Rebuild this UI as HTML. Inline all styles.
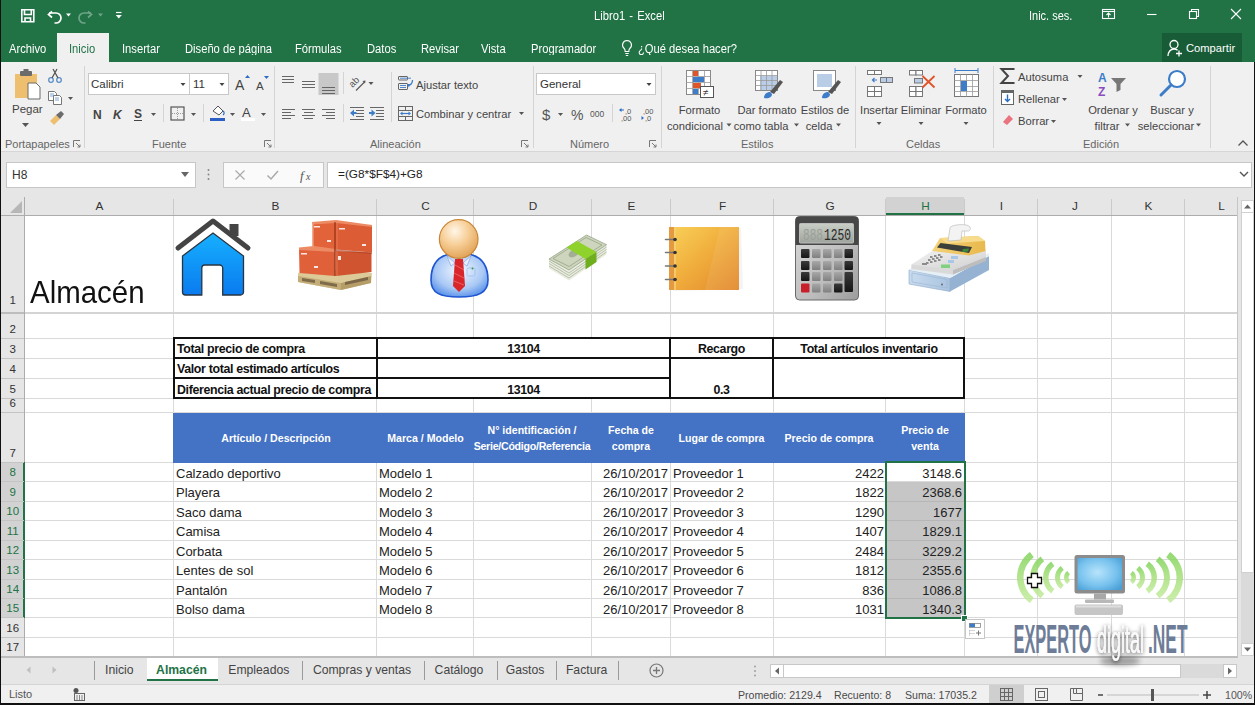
<!DOCTYPE html><html><head><meta charset="utf-8"><style>
*{margin:0;padding:0;box-sizing:border-box}
html,body{width:1255px;height:705px;overflow:hidden;background:#e6e6e6;font-family:"Liberation Sans", sans-serif;}
.a{position:absolute}
.t{position:absolute;white-space:nowrap;line-height:1}
.w{color:#fff}
.rt{color:#444;font-size:11px}
.gl{color:#666;font-size:11px}
.sep{position:absolute;width:1px;background:#d4d4d4}
.vl{position:absolute;width:1px;background:#dadada}
.hl{position:absolute;height:1px;background:#dadada}
.cell{position:absolute;white-space:nowrap;line-height:1;font-size:12.6px;color:#222}
.b{font-weight:bold}
.blk{position:absolute;background:#111}
</style></head><body>
<div class="a" style="left:0;top:0;width:1255px;height:62px;background:#217346"></div>
<svg class="a" style="left:0;top:0" width="140" height="32" viewBox="0 0 140 32">
<g fill="none" stroke="#fff" stroke-width="1.6">
<path d="M21.8 9.8h12v12h-12z"/><path d="M24.5 10v4.5h6.8V10"/><path d="M25 21.5v-3.5h5.5v3.5"/>
</g>
<path d="M52 11.5 L48.5 14.5 L52 17.5" fill="none" stroke="#fff" stroke-width="1.7"/>
<path d="M49 14.5 H56 a5 5 0 0 1 0 10 h-1.5" fill="none" stroke="#fff" stroke-width="1.7" transform="translate(0,-1.5)"/>
<path d="M66 13.5h5l-2.5 3z" fill="#fff"/>
<g opacity="0.35"><path d="M88 11.5 L91.5 14.5 L88 17.5" fill="none" stroke="#fff" stroke-width="1.7"/>
<path d="M91 13 H84 a5 5 0 0 0 0 10 h1.5" fill="none" stroke="#fff" stroke-width="1.7"/>
<path d="M98 13.5h5l-2.5 3z" fill="#fff"/></g>
<path d="M116 12.5h5.5" stroke="#fff" stroke-width="1.2"/><path d="M115.8 15h6l-3 3.5z" fill="#fff"/>
</svg>
<div class="t w" style="left:594px;top:10.5px;font-size:11.2px;transform:scaleY(1.15);transform-origin:0 100%;word-spacing:-1px">Libro1&nbsp; -&nbsp; Excel</div>
<div class="t w" style="left:1029px;top:10.5px;font-size:11px;transform:scaleY(1.15);transform-origin:0 100%">Inic. ses.</div>
<svg class="a" style="left:1095px;top:0" width="160" height="32" viewBox="1095 0 160 32">
<g fill="none" stroke="#fff" stroke-width="1.1">
<rect x="1102.5" y="9.5" width="12" height="9"/><path d="M1102.5 11.5h12"/><path d="M1108.5 17.5v-4.5M1106.5 15l2-2 2 2"/>
<path d="M1147 14.5h9.5"/>
<rect x="1189.5" y="11.5" width="7" height="7"/><path d="M1191.5 11.5v-2h7v7h-2"/>
<path d="M1231 9l10 10M1241 9l-10 10"/>
</g></svg>
<div class="a" style="left:57px;top:33px;width:52px;height:30px;background:#f0f0f0"></div>
<div class="t" style="left:9px;top:43.5px;font-size:11.2px;color:#fff;transform:scaleY(1.13);transform-origin:0 100%">Archivo</div>
<div class="t" style="left:69px;top:43.5px;font-size:11.2px;color:#217346;transform:scaleY(1.13);transform-origin:0 100%">Inicio</div>
<div class="t" style="left:122px;top:43.5px;font-size:11.2px;color:#fff;transform:scaleY(1.13);transform-origin:0 100%">Insertar</div>
<div class="t" style="left:185px;top:43.5px;font-size:11.2px;color:#fff;transform:scaleY(1.13);transform-origin:0 100%">Diseño de página</div>
<div class="t" style="left:295px;top:43.5px;font-size:11.2px;color:#fff;transform:scaleY(1.13);transform-origin:0 100%">Fórmulas</div>
<div class="t" style="left:367px;top:43.5px;font-size:11.2px;color:#fff;transform:scaleY(1.13);transform-origin:0 100%">Datos</div>
<div class="t" style="left:421px;top:43.5px;font-size:11.2px;color:#fff;transform:scaleY(1.13);transform-origin:0 100%">Revisar</div>
<div class="t" style="left:481px;top:43.5px;font-size:11.2px;color:#fff;transform:scaleY(1.13);transform-origin:0 100%">Vista</div>
<div class="t" style="left:531px;top:43.5px;font-size:11.2px;color:#fff;transform:scaleY(1.13);transform-origin:0 100%">Programador</div>
<div class="t" style="left:638px;top:43.5px;font-size:11.2px;color:#fff;transform:scaleY(1.13);transform-origin:0 100%">¿Qué desea hacer?</div>
<svg class="a" style="left:618px;top:38px" width="18" height="20" viewBox="0 0 18 20"><g fill="none" stroke="#fff" stroke-width="1.1"><path d="M9 2.5a4.5 4.5 0 0 0-2.8 8c.6.6.9 1.4.9 2.2v.8h3.8v-.8c0-.8.3-1.6.9-2.2A4.5 4.5 0 0 0 9 2.5z"/><path d="M7.3 15.5h3.4M7.8 17.5h2.4"/></g></svg>
<div class="a" style="left:1162px;top:33px;width:80px;height:29px;background:#185c37"></div>
<svg class="a" style="left:1166px;top:38px" width="18" height="20" viewBox="0 0 18 20"><g fill="none" stroke="#fff" stroke-width="1.3"><circle cx="8" cy="6.5" r="4"/><path d="M2 18c0-4 2.5-7 6-7 1.5 0 2.7.5 3.6 1.2"/><path d="M13 12.5v6M10 15.5h6"/></g></svg>
<div class="t w" style="left:1186px;top:43px;font-size:11.2px">Compartir</div>
<div class="a" style="left:0;top:62px;width:1255px;height:90px;background:#f0f0f0;border-bottom:1px solid #d6d6d6"></div>
<div class="sep" style="left:84px;top:66px;height:82px"></div>
<div class="sep" style="left:274px;top:66px;height:82px"></div>
<div class="sep" style="left:533px;top:66px;height:82px"></div>
<div class="sep" style="left:661px;top:66px;height:82px"></div>
<div class="sep" style="left:855px;top:66px;height:82px"></div>
<div class="sep" style="left:993px;top:66px;height:82px"></div>
<div class="sep" style="left:1210px;top:66px;height:82px"></div>
<div class="t gl" style="left:5px;top:139px">Portapapeles</div>
<div class="t gl" style="left:152px;top:139px">Fuente</div>
<div class="t gl" style="left:370px;top:139px">Alineación</div>
<div class="t gl" style="left:570px;top:139px">Número</div>
<div class="t gl" style="left:741px;top:139px">Estilos</div>
<div class="t gl" style="left:906px;top:139px">Celdas</div>
<div class="t gl" style="left:1083px;top:139px">Edición</div>
<svg class="a" style="left:73px;top:140px" width="8" height="8" viewBox="0 0 8 8"><path d="M.5 7V.5H7" fill="none" stroke="#777" stroke-width="1"/><path d="M3 3l4 4M7 4.5V7H4.5" fill="none" stroke="#777" stroke-width="1"/></svg>
<svg class="a" style="left:264px;top:140px" width="8" height="8" viewBox="0 0 8 8"><path d="M.5 7V.5H7" fill="none" stroke="#777" stroke-width="1"/><path d="M3 3l4 4M7 4.5V7H4.5" fill="none" stroke="#777" stroke-width="1"/></svg>
<svg class="a" style="left:521px;top:140px" width="8" height="8" viewBox="0 0 8 8"><path d="M.5 7V.5H7" fill="none" stroke="#777" stroke-width="1"/><path d="M3 3l4 4M7 4.5V7H4.5" fill="none" stroke="#777" stroke-width="1"/></svg>
<svg class="a" style="left:649px;top:140px" width="8" height="8" viewBox="0 0 8 8"><path d="M.5 7V.5H7" fill="none" stroke="#777" stroke-width="1"/><path d="M3 3l4 4M7 4.5V7H4.5" fill="none" stroke="#777" stroke-width="1"/></svg>
<svg class="a" style="left:1237px;top:139px" width="12" height="8" viewBox="0 0 12 8"><path d="M1.5 6.5l4.5-4.5 4.5 4.5" fill="none" stroke="#555" stroke-width="1.3"/></svg>
<svg class="a" style="left:0;top:62px" width="84" height="80" viewBox="0 62 84 80">
<rect x="15" y="74" width="22" height="24" fill="#eebf6e"/>
<rect x="20" y="71" width="12" height="5" rx="1" fill="#6b6b6b"/><rect x="23.5" y="69" width="5" height="3" fill="#6b6b6b"/>
<path d="M28 83h8l4 4v12H28z" fill="#fff" stroke="#6b6b6b" stroke-width="1"/>
<g fill="none" stroke="#5b8fc7" stroke-width="1.3"><circle cx="51" cy="80" r="2.3"/><circle cx="59" cy="80" r="2.3"/></g>
<path d="M52 78l5-9M58 78l-5-9" stroke="#555" stroke-width="1.3"/>
<g fill="#fff" stroke="#666" stroke-width="0.9"><path d="M48.5 91.5h6l2 2v7h-8z"/><path d="M53.5 95.5h6l2 2v7h-8z"/></g>
<path d="M50 94h4M50 96h4M55 98h4M55 100h4" stroke="#5b8fc7" stroke-width="0.8"/>
<path d="M68 97h5l-2.5 3z" fill="#555"/>
<path d="M50 121l6-6 4 4-6 6z" fill="#eebf6e"/><path d="M56 115l5-4 3 3-4 5z" fill="#6b6b6b"/>
</svg>
<div class="t rt" style="left:12px;top:104px;font-size:11.5px">Pegar</div>
<svg class="a" style="left:22px;top:123px" width="8" height="5"><path d="M0 0h7l-3.5 4z" fill="#555"/></svg>
<div class="a" style="left:88px;top:73px;width:102px;height:22px;background:#fff;border:1px solid #c8c8c8"></div>
<div class="a" style="left:189px;top:73px;width:40px;height:22px;background:#fff;border:1px solid #c8c8c8"></div>
<div class="t" style="left:91px;top:79px;font-size:11.5px;color:#333">Calibri</div>
<div class="t" style="left:193px;top:79px;font-size:11.5px;color:#333">11</div>
<svg class="a" style="left:84px;top:62px" width="190" height="80" viewBox="84 62 190 80">
<path d="M180.5 83h5l-2.5 3z M219.5 83h5l-2.5 3z" fill="#444"/>
<text x="235" y="90" font-family="Liberation Sans" font-size="14" fill="#444">A</text><path d="M245 78h5l-2.5-3z" fill="#2b6cc4"/>
<text x="256" y="90" font-family="Liberation Sans" font-size="11.5" fill="#444">A</text><path d="M264 76h5l-2.5 3z" fill="#2b6cc4"/>
<text x="93" y="119" font-family="Liberation Sans" font-size="12" font-weight="bold" fill="#444">N</text>
<text x="113" y="119" font-family="Liberation Sans" font-size="12" font-weight="bold" font-style="italic" fill="#444">K</text>
<text x="134" y="118" font-family="Liberation Sans" font-size="12" font-weight="bold" fill="#444">S</text><path d="M134 120.5h8" stroke="#444"/>
<path d="M151 113h5l-2.5 3z" fill="#555"/>
<path d="M163.5 104v18" stroke="#d4d4d4"/>
<rect x="171" y="107" width="13" height="13" fill="none" stroke="#555" stroke-width="1.2"/><path d="M177.5 108v11M172 113.5h11" stroke="#888" stroke-width="0.8" stroke-dasharray="1 1"/>
<path d="M191 113h5l-2.5 3z" fill="#555"/>
<path d="M203.5 104v18" stroke="#d4d4d4"/>
<path d="M213 111l5-5 5 5-4 4z" fill="#fff" stroke="#555" stroke-width="1"/><path d="M223 111c1.5 1 1.5 3 0 4" stroke="#2b6cc4" stroke-width="1.2" fill="none"/>
<rect x="210" y="118" width="15" height="3" fill="#2b5fc4"/>
<path d="M230 113h5l-2.5 3z" fill="#555"/>
<text x="242" y="117" font-family="Liberation Sans" font-size="13" fill="#444">A</text><rect x="241" y="118" width="14" height="3" fill="#fff"/>
<path d="M261 113h5l-2.5 3z" fill="#555"/>
</svg>
<svg class="a" style="left:274px;top:62px" width="259" height="80" viewBox="274 62 259 80">
<g stroke="#666" stroke-width="1.1">
<path d="M282 76.5h12M282 79.5h12M282 82.5h12"/>
<path d="M302 81.5h13M302 84.5h13M302 87.5h13"/>
</g>
<rect x="318.5" y="73" width="20" height="22" fill="#c8c8c8"/>
<path d="M322 87.5h13M322 90.5h13M322 93.5h13" stroke="#666" stroke-width="1.1"/>
<path d="M343.5 72v22 M343.5 104v18 M391.5 72v50" stroke="#d4d4d4"/>
<text x="0" y="0" font-family="Liberation Sans" font-size="9.5" fill="#555" transform="translate(352.5 88) rotate(-45)">ab</text>
<path d="M356 90.5l9-9" stroke="#555" stroke-width="1.1"/><path d="M362.5 81l3-0.5-0.5 3z" fill="#555"/>
<path d="M368.5 82h5l-2.5 3z" fill="#555"/>
<g stroke="#666" stroke-width="1.1">
<path d="M282 109.5h13M282 112.5h9M282 115.5h13M282 118.5h9"/>
<path d="M302 109.5h13M304 112.5h9M302 115.5h13M304 118.5h9"/>
<path d="M322 109.5h13M326 112.5h9M322 115.5h13M326 118.5h9"/>
<path d="M350 107.5h14M356 110.5h8M356 113.5h8M356 116.5h8M350 119.5h14"/>
<path d="M370 107.5h14M376 110.5h8M376 113.5h8M376 116.5h8M370 119.5h14"/>
</g>
<path d="M350 113l4-3.5v7z M375.5 113l-4-3.5v7z" fill="#3d7cc9"/><path d="M353 113h3.5M369 113h3.5" stroke="#3d7cc9" stroke-width="1.8"/>
<g fill="none" stroke="#666" stroke-width="1"><rect x="398.5" y="76.5" width="9" height="3.5" rx="0.5"/><rect x="398.5" y="83.5" width="9" height="6" rx="0.5"/></g>
<path d="M400 78.2h11M400 85.5h6M400 87.5h6" stroke="#3d7cc9" stroke-width="0.9"/>
<path d="M412.5 80c0 3-1.5 5-4.5 5.5" fill="none" stroke="#3d7cc9" stroke-width="1.3"/><path d="M407 84l2 3.5 1-3.5z" fill="#3d7cc9"/>
<g fill="none" stroke="#666" stroke-width="1"><rect x="398.5" y="106.5" width="14" height="14"/><path d="M398.5 110.5h14M398.5 116.5h14M405.5 106.5v4M405.5 116.5v4"/></g>
<path d="M401.5 113.5h8" stroke="#3d7cc9" stroke-width="1.2"/><path d="M400 113.5l2.5-2v4zM411 113.5l-2.5-2v4z" fill="#3d7cc9"/>
<path d="M519 112h5l-2.5 3z" fill="#555"/>
</svg>
<div class="t rt" style="left:416px;top:80px;font-size:11.2px">Ajustar texto</div>
<div class="t rt" style="left:416px;top:109px;font-size:11.2px">Combinar y centrar</div>
<div class="a" style="left:536px;top:73px;width:120px;height:22px;background:#fff;border:1px solid #c8c8c8"></div>
<div class="t" style="left:540px;top:79px;font-size:11.5px;color:#333">General</div>
<svg class="a" style="left:533px;top:62px" width="128" height="80" viewBox="533 62 128 80">
<path d="M646.5 83h5l-2.5 3z" fill="#444"/>
<text x="542" y="120" font-family="Liberation Sans" font-size="15" fill="#555">$</text>
<path d="M558 113h5l-2.5 3z" fill="#555"/>
<text x="571" y="120" font-family="Liberation Sans" font-size="14" fill="#555">%</text>
<text x="590" y="117" font-family="Liberation Sans" font-size="8.5" fill="#555">000</text>
<path d="M612.5 104v18" stroke="#d4d4d4"/>
<text x="625" y="114" font-family="Liberation Sans" font-size="7.5" fill="#555">,0</text><text x="621" y="121" font-family="Liberation Sans" font-size="7.5" fill="#555">,00</text>
<path d="M619 110l2.5-2v4z" fill="#2b6cc4"/><path d="M620 110h4" stroke="#2b6cc4"/>
<text x="643" y="114" font-family="Liberation Sans" font-size="7.5" fill="#555">,00</text><text x="645" y="121" font-family="Liberation Sans" font-size="7.5" fill="#555">,0</text>
<path d="M644 118l-2.5-2v4z" transform="translate(0,0)" fill="#2b6cc4"/>
</svg>
<svg class="a" style="left:661px;top:62px" width="194" height="80" viewBox="661 62 194 80">
<g>
<rect x="686.5" y="70.5" width="24" height="24" fill="#fff" stroke="#888"/>
<path d="M686.5 76.5h24M686.5 82.5h24M686.5 88.5h24M692.5 70.5v24M698.5 70.5v24M704.5 70.5v24" stroke="#999" stroke-width="0.8"/>
<rect x="693" y="71" width="5" height="5" fill="#e0542a"/><rect x="693" y="77" width="11" height="5" fill="#3d7cc9"/><rect x="693" y="83" width="8" height="5" fill="#e0542a"/><rect x="693" y="89" width="5" height="5" fill="#3d7cc9"/>
<rect x="700.5" y="86.5" width="13" height="11" fill="#fff" stroke="#555"/><text x="703" y="96" font-family="Liberation Sans" font-size="10" fill="#333">≠</text>
</g>
<g>
<rect x="755.5" y="70.5" width="22" height="20" fill="#fff" stroke="#888"/>
<rect x="760" y="76" width="17" height="14" fill="#b9cde6"/>
<path d="M755.5 75.5h22M755.5 80.5h22M755.5 85.5h22M761 70.5v20M766.5 70.5v20M772 70.5v20" stroke="#999" stroke-width="0.8"/>
<path d="M770 92l10-12 3 2-9 12z" fill="#555"/><path d="M764 98c0-4 3-6 6-6l2 2c0 3-3 5-8 4z" fill="#3d7cc9"/>
</g>
<g>
<rect x="813.5" y="70.5" width="22" height="20" fill="#fff" stroke="#888"/>
<rect x="817" y="74" width="15" height="13" fill="#b9cde6"/>
<path d="M828 92l10-12 3 2-9 12z" fill="#555"/><path d="M822 98c0-4 3-6 6-6l2 2c0 3-3 5-8 4z" fill="#3d7cc9"/>
</g>
<path d="M726.5 123.5h5l-2.5 3z M794 123.5h5l-2.5 3z M836 123.5h5l-2.5 3z" fill="#555"/>
</svg>
<div class="t rt" style="left:699.5px;top:105px;font-size:11.2px;transform:translateX(-50%)">Formato</div>
<div class="t rt" style="left:695px;top:121px;font-size:11.2px;transform:translateX(-50%)">condicional</div>
<div class="t rt" style="left:767px;top:105px;font-size:11.2px;transform:translateX(-50%)">Dar formato</div>
<div class="t rt" style="left:761px;top:121px;font-size:11.2px;transform:translateX(-50%)">como tabla</div>
<div class="t rt" style="left:825px;top:105px;font-size:11.2px;transform:translateX(-50%)">Estilos de</div>
<div class="t rt" style="left:819px;top:121px;font-size:11.2px;transform:translateX(-50%)">celda</div>
<svg class="a" style="left:855px;top:62px" width="138" height="80" viewBox="855 62 138 80">
<g fill="#fff" stroke="#777" stroke-width="1">
<rect x="867.5" y="70.5" width="7" height="4"/><rect x="874.5" y="70.5" width="7" height="4"/>
<rect x="867.5" y="86.5" width="7" height="5"/><rect x="874.5" y="86.5" width="7" height="5"/><rect x="867.5" y="91.5" width="7" height="5"/><rect x="874.5" y="91.5" width="7" height="5"/>
<rect x="880.5" y="77.5" width="6" height="5" fill="#b9cde6"/><rect x="886.5" y="77.5" width="6" height="5" fill="#b9cde6"/>
<rect x="909.5" y="70.5" width="6.5" height="4.5"/><rect x="916" y="70.5" width="6.5" height="4.5"/>
<rect x="909.5" y="86.5" width="6.5" height="5"/><rect x="916" y="86.5" width="6.5" height="5"/><rect x="909.5" y="91.5" width="6.5" height="5"/><rect x="916" y="91.5" width="6.5" height="5"/>
<rect x="914.5" y="78.5" width="8" height="4.5" fill="#b9cde6"/>
<rect x="954.5" y="74.5" width="24" height="22"/>
</g>
<path d="M877 80h-4m1.5-2l-2 2 2 2" stroke="#3d7cc9" stroke-width="1.2" fill="none"/>
<path d="M922.5 76l12 11.5M934.5 76l-12 11.5" stroke="#e0542a" stroke-width="1.8"/>
<path d="M954.5 80.5h24M954.5 86.5h24M954.5 91.5h24M960.5 74.5v22M966.5 74.5v22M972.5 74.5v22" stroke="#999" stroke-width="0.8"/>
<rect x="961" y="81" width="6" height="10" fill="#3d7cc9"/>
<path d="M955 70.5h23M955 68v5M978 68v5" stroke="#3d7cc9" stroke-width="1"/>
<path d="M876.5 122h5l-2.5 3z M918.5 122h5l-2.5 3z M963.5 122h5l-2.5 3z" fill="#555"/>
</svg>
<div class="t rt" style="left:879px;top:105px;font-size:11.2px;transform:translateX(-50%)">Insertar</div>
<div class="t rt" style="left:921px;top:105px;font-size:11.2px;transform:translateX(-50%)">Eliminar</div>
<div class="t rt" style="left:966px;top:105px;font-size:11.2px;transform:translateX(-50%)">Formato</div>
<svg class="a" style="left:993px;top:62px" width="217" height="80" viewBox="993 62 217 80">
<path d="M1014.5 69h-13l6.5 7-6.5 7h13" fill="none" stroke="#444" stroke-width="2"/>
<path d="M1077.5 75h5l-2.5 3z" fill="#555"/>
<rect x="1001.5" y="90.5" width="12" height="14" fill="#fff" stroke="#666"/><rect x="1001.5" y="90.5" width="12" height="2.5" fill="#666"/>
<path d="M1007.5 94.5v7M1005 99l2.5 2.5 2.5-2.5" fill="none" stroke="#2b6cc4" stroke-width="1.4"/>
<path d="M1062 98h5l-2.5 3z" fill="#555"/>
<path d="M1003 122l6-7 4 4-6 6z" fill="#e9737f"/>
<path d="M1051 120h5l-2.5 3z" fill="#555"/>
<text x="1098" y="82" font-family="Liberation Sans" font-size="12" font-weight="bold" fill="#3d7cc9">A</text>
<text x="1098" y="96" font-family="Liberation Sans" font-size="12" font-weight="bold" fill="#8a4bbd">Z</text>
<path d="M1111 78h15l-5.5 6v6l-4 2v-8z" fill="#777"/>
<circle cx="1177" cy="79" r="8" fill="#fff" stroke="#3d7cc9" stroke-width="2.2"/><path d="M1171 85l-10 10" stroke="#3d7cc9" stroke-width="3" stroke-linecap="round"/>
<path d="M1125 123.5h5l-2.5 3z M1196 123.5h5l-2.5 3z" fill="#555"/>
</svg>
<div class="t rt" style="left:1018px;top:72px;font-size:11.2px">Autosuma</div>
<div class="t rt" style="left:1018px;top:94px;font-size:11.2px">Rellenar</div>
<div class="t rt" style="left:1018px;top:116px;font-size:11.2px">Borrar</div>
<div class="t rt" style="left:1113px;top:105px;font-size:11.2px;transform:translateX(-50%)">Ordenar y</div>
<div class="t rt" style="left:1107px;top:121px;font-size:11.2px;transform:translateX(-50%)">filtrar</div>
<div class="t rt" style="left:1172px;top:105px;font-size:11.2px;transform:translateX(-50%)">Buscar y</div>
<div class="t rt" style="left:1166px;top:121px;font-size:11.2px;transform:translateX(-50%)">seleccionar</div>
<div class="a" style="left:6px;top:162px;width:190px;height:26px;background:#fff;border:1px solid #c6c6c6"></div>
<div class="t" style="left:12px;top:169px;font-size:12px;color:#333">H8</div>
<svg class="a" style="left:180px;top:172px" width="10" height="6"><path d="M1 0h8l-4 5z" fill="#666"/></svg>
<svg class="a" style="left:206px;top:168px" width="5" height="16"><circle cx="2.5" cy="2" r="1" fill="#888"/><circle cx="2.5" cy="6.5" r="1" fill="#888"/><circle cx="2.5" cy="11" r="1" fill="#888"/></svg>
<div class="a" style="left:223px;top:162px;width:101px;height:26px;background:#fafafa;border:1px solid #c6c6c6"></div>
<svg class="a" style="left:223px;top:162px" width="101" height="26" viewBox="223 162 101 26">
<path d="M235.5 170.5l9 9M244.5 170.5l-9 9" stroke="#aaa" stroke-width="1.2"/>
<path d="M267.5 175.5l3.5 3.5 7-8" fill="none" stroke="#aaa" stroke-width="1.5"/>
<text x="300" y="180" font-family="Liberation Serif" font-size="13" font-style="italic" fill="#555">f</text><text x="306" y="180" font-family="Liberation Serif" font-size="10" font-style="italic" fill="#555">x</text>
</svg>
<div class="a" style="left:327px;top:162px;width:925px;height:26px;background:#fff;border:1px solid #c6c6c6"></div>
<div class="t" style="left:338px;top:169px;font-size:11.8px;color:#222">=(G8*$F$4)+G8</div>
<svg class="a" style="left:1239px;top:171px" width="10" height="7"><path d="M1 1l4 4 4-4" fill="none" stroke="#555" stroke-width="1.4"/></svg>
<div class="a" style="left:1px;top:197px;width:1237px;height:19px;background:#e6e6e6"></div>
<div class="a" style="left:1px;top:215px;width:1237px;height:1px;background:#acacac"></div>
<div class="a" style="left:886px;top:197px;width:78px;height:18px;background:#d2d2d2"></div>
<div class="a" style="left:886px;top:213px;width:78px;height:2px;background:#217346"></div>
<div class="a" style="left:24px;top:199px;width:1px;height:16px;background:#cacaca"></div>
<div class="t" style="left:99.5px;top:201px;font-size:11.8px;color:#333;transform:translateX(-50%)">A</div>
<div class="a" style="left:173px;top:199px;width:1px;height:16px;background:#cacaca"></div>
<div class="t" style="left:275.5px;top:201px;font-size:11.8px;color:#333;transform:translateX(-50%)">B</div>
<div class="a" style="left:376px;top:199px;width:1px;height:16px;background:#cacaca"></div>
<div class="t" style="left:425.5px;top:201px;font-size:11.8px;color:#333;transform:translateX(-50%)">C</div>
<div class="a" style="left:473px;top:199px;width:1px;height:16px;background:#cacaca"></div>
<div class="t" style="left:533.0px;top:201px;font-size:11.8px;color:#333;transform:translateX(-50%)">D</div>
<div class="a" style="left:591px;top:199px;width:1px;height:16px;background:#cacaca"></div>
<div class="t" style="left:631.5px;top:201px;font-size:11.8px;color:#333;transform:translateX(-50%)">E</div>
<div class="a" style="left:670px;top:199px;width:1px;height:16px;background:#cacaca"></div>
<div class="t" style="left:722.5px;top:201px;font-size:11.8px;color:#333;transform:translateX(-50%)">F</div>
<div class="a" style="left:773px;top:199px;width:1px;height:16px;background:#cacaca"></div>
<div class="t" style="left:830.0px;top:201px;font-size:11.8px;color:#333;transform:translateX(-50%)">G</div>
<div class="a" style="left:885px;top:199px;width:1px;height:16px;background:#cacaca"></div>
<div class="t" style="left:925.5px;top:201px;font-size:11.8px;color:#217346;transform:translateX(-50%)">H</div>
<div class="a" style="left:964px;top:199px;width:1px;height:16px;background:#cacaca"></div>
<div class="t" style="left:1001.5px;top:201px;font-size:11.8px;color:#333;transform:translateX(-50%)">I</div>
<div class="a" style="left:1037px;top:199px;width:1px;height:16px;background:#cacaca"></div>
<div class="t" style="left:1075.0px;top:201px;font-size:11.8px;color:#333;transform:translateX(-50%)">J</div>
<div class="a" style="left:1111px;top:199px;width:1px;height:16px;background:#cacaca"></div>
<div class="t" style="left:1148.5px;top:201px;font-size:11.8px;color:#333;transform:translateX(-50%)">K</div>
<div class="a" style="left:1184px;top:199px;width:1px;height:16px;background:#cacaca"></div>
<div class="t" style="left:1221.5px;top:201px;font-size:11.8px;color:#333;transform:translateX(-50%)">L</div>
<svg class="a" style="left:8px;top:200px" width="16" height="14"><path d="M14 1v12H2z" fill="#b7b7b7"/></svg>
<div class="a" style="left:25px;top:216px;width:1213px;height:441px;background:#fff"></div>
<div class="a" style="left:1px;top:216px;width:24px;height:441px;background:#e6e6e6"></div>
<div class="a" style="left:24px;top:197px;width:1px;height:460px;background:#acacac"></div>
<div class="a" style="left:1px;top:463px;width:23px;height:155px;background:#d2d2d2"></div>
<div class="a" style="left:23px;top:462px;width:2px;height:156px;background:#217346"></div>
<div class="vl" style="left:173px;top:216px;height:441px"></div>
<div class="vl" style="left:376px;top:216px;height:441px"></div>
<div class="vl" style="left:473px;top:216px;height:441px"></div>
<div class="vl" style="left:591px;top:216px;height:441px"></div>
<div class="vl" style="left:670px;top:216px;height:441px"></div>
<div class="vl" style="left:773px;top:216px;height:441px"></div>
<div class="vl" style="left:885px;top:216px;height:441px"></div>
<div class="vl" style="left:964px;top:216px;height:441px"></div>
<div class="vl" style="left:1037px;top:216px;height:441px"></div>
<div class="vl" style="left:1111px;top:216px;height:441px"></div>
<div class="vl" style="left:1184px;top:216px;height:441px"></div>
<div class="hl" style="left:25px;top:312px;width:1213px"></div>
<div class="a" style="left:1px;top:312px;width:23px;height:1px;background:#c4c4c4"></div>
<div class="hl" style="left:25px;top:338px;width:1213px"></div>
<div class="a" style="left:1px;top:338px;width:23px;height:1px;background:#c4c4c4"></div>
<div class="hl" style="left:25px;top:358px;width:1213px"></div>
<div class="a" style="left:1px;top:358px;width:23px;height:1px;background:#c4c4c4"></div>
<div class="hl" style="left:25px;top:378px;width:1213px"></div>
<div class="a" style="left:1px;top:378px;width:23px;height:1px;background:#c4c4c4"></div>
<div class="hl" style="left:25px;top:398px;width:1213px"></div>
<div class="a" style="left:1px;top:398px;width:23px;height:1px;background:#c4c4c4"></div>
<div class="hl" style="left:25px;top:412px;width:1213px"></div>
<div class="a" style="left:1px;top:412px;width:23px;height:1px;background:#c4c4c4"></div>
<div class="hl" style="left:25px;top:462px;width:1213px"></div>
<div class="a" style="left:1px;top:462px;width:23px;height:1px;background:#c4c4c4"></div>
<div class="hl" style="left:25px;top:481px;width:1213px"></div>
<div class="a" style="left:1px;top:481px;width:23px;height:1px;background:#c4c4c4"></div>
<div class="hl" style="left:25px;top:501px;width:1213px"></div>
<div class="a" style="left:1px;top:501px;width:23px;height:1px;background:#c4c4c4"></div>
<div class="hl" style="left:25px;top:520px;width:1213px"></div>
<div class="a" style="left:1px;top:520px;width:23px;height:1px;background:#c4c4c4"></div>
<div class="hl" style="left:25px;top:540px;width:1213px"></div>
<div class="a" style="left:1px;top:540px;width:23px;height:1px;background:#c4c4c4"></div>
<div class="hl" style="left:25px;top:559px;width:1213px"></div>
<div class="a" style="left:1px;top:559px;width:23px;height:1px;background:#c4c4c4"></div>
<div class="hl" style="left:25px;top:579px;width:1213px"></div>
<div class="a" style="left:1px;top:579px;width:23px;height:1px;background:#c4c4c4"></div>
<div class="hl" style="left:25px;top:598px;width:1213px"></div>
<div class="a" style="left:1px;top:598px;width:23px;height:1px;background:#c4c4c4"></div>
<div class="hl" style="left:25px;top:617px;width:1213px"></div>
<div class="a" style="left:1px;top:617px;width:23px;height:1px;background:#c4c4c4"></div>
<div class="hl" style="left:25px;top:637px;width:1213px"></div>
<div class="a" style="left:1px;top:637px;width:23px;height:1px;background:#c4c4c4"></div>
<div class="a" style="left:1px;top:312px;width:23px;height:2px;background:#bdbdbd"></div>
<div class="a" style="left:25px;top:312px;width:1213px;height:2px;background:#d4d4d4"></div>
<div class="t" style="left:12.7px;top:295px;font-size:11.5px;color:#333;transform:translateX(-50%)">1</div>
<div class="t" style="left:12.7px;top:324px;font-size:11.5px;color:#333;transform:translateX(-50%)">2</div>
<div class="t" style="left:12.7px;top:344px;font-size:11.5px;color:#333;transform:translateX(-50%)">3</div>
<div class="t" style="left:12.7px;top:364px;font-size:11.5px;color:#333;transform:translateX(-50%)">4</div>
<div class="t" style="left:12.7px;top:384px;font-size:11.5px;color:#333;transform:translateX(-50%)">5</div>
<div class="t" style="left:12.7px;top:398px;font-size:11.5px;color:#333;transform:translateX(-50%)">6</div>
<div class="t" style="left:12.7px;top:448px;font-size:11.5px;color:#333;transform:translateX(-50%)">7</div>
<div class="t" style="left:12.7px;top:467px;font-size:11.5px;color:#217346;transform:translateX(-50%)">8</div>
<div class="t" style="left:12.7px;top:487px;font-size:11.5px;color:#217346;transform:translateX(-50%)">9</div>
<div class="t" style="left:12.7px;top:506px;font-size:11.5px;color:#217346;transform:translateX(-50%)">10</div>
<div class="t" style="left:12.7px;top:526px;font-size:11.5px;color:#217346;transform:translateX(-50%)">11</div>
<div class="t" style="left:12.7px;top:545px;font-size:11.5px;color:#217346;transform:translateX(-50%)">12</div>
<div class="t" style="left:12.7px;top:565px;font-size:11.5px;color:#217346;transform:translateX(-50%)">13</div>
<div class="t" style="left:12.7px;top:584px;font-size:11.5px;color:#217346;transform:translateX(-50%)">14</div>
<div class="t" style="left:12.7px;top:603px;font-size:11.5px;color:#217346;transform:translateX(-50%)">15</div>
<div class="t" style="left:12.7px;top:623px;font-size:11.5px;color:#333;transform:translateX(-50%)">16</div>
<div class="t" style="left:12.7px;top:642px;font-size:11.5px;color:#333;transform:translateX(-50%)">17</div>
<div class="a" style="left:1px;top:656px;width:1237px;height:2px;background:#bdbdbd"></div>
<div class="a" style="left:1237px;top:197px;width:1px;height:460px;background:#c6c6c6"></div>
<div class="t" style="left:30px;top:277px;font-size:31.5px;color:#111;transform:scaleX(0.935);transform-origin:0 0">Almacén</div>
<div class="a" style="left:174px;top:338px;width:790px;height:60px;background:#fff"></div>
<div class="cell b" style="left:177px;top:343px;font-size:12.4px;color:#111;letter-spacing:-0.35px;">Total precio de compra</div>
<div class="cell b" style="left:177px;top:363px;font-size:12.4px;color:#111;letter-spacing:-0.35px;">Valor total estimado artículos</div>
<div class="cell b" style="left:177px;top:384px;font-size:12.4px;color:#111;letter-spacing:-0.35px;">Diferencia actual precio de compra</div>
<div class="cell b" style="left:523.5px;top:343px;font-size:12.4px;color:#111;transform:translateX(-50%);letter-spacing:-0.35px;">13104</div>
<div class="cell b" style="left:523.5px;top:384px;font-size:12.4px;color:#111;transform:translateX(-50%);letter-spacing:-0.35px;">13104</div>
<div class="cell b" style="left:721.5px;top:343px;font-size:12.4px;color:#111;transform:translateX(-50%);letter-spacing:-0.35px;">Recargo</div>
<div class="cell b" style="left:721.5px;top:384px;font-size:12.4px;color:#111;transform:translateX(-50%);letter-spacing:-0.35px;">0.3</div>
<div class="cell b" style="left:869px;top:343px;font-size:12.4px;color:#111;transform:translateX(-50%);letter-spacing:-0.35px;">Total artículos inventario</div>
<div class="blk" style="left:173px;top:337px;width:792px;height:2px"></div>
<div class="blk" style="left:173px;top:397px;width:792px;height:2px"></div>
<div class="blk" style="left:173px;top:357px;width:792px;height:2px"></div>
<div class="blk" style="left:173px;top:377px;width:498px;height:2px"></div>
<div class="blk" style="left:173px;top:337px;width:2px;height:62px"></div>
<div class="blk" style="left:376px;top:337px;width:2px;height:62px"></div>
<div class="blk" style="left:669px;top:337px;width:2px;height:62px"></div>
<div class="blk" style="left:772px;top:337px;width:2px;height:62px"></div>
<div class="blk" style="left:963px;top:337px;width:2px;height:62px"></div>
<div class="a" style="left:173px;top:413px;width:792px;height:50px;background:#4472c4"></div>
<div class="cell b" style="left:276px;top:433px;font-size:10.6px;color:#fff;transform:translateX(-50%);">Artículo / Descripción</div>
<div class="cell b" style="left:425.5px;top:433px;font-size:10.6px;color:#fff;transform:translateX(-50%);">Marca / Modelo</div>
<div class="cell b" style="left:532px;top:425px;font-size:10.6px;color:#fff;transform:translateX(-50%);">N° identificación /</div>
<div class="cell b" style="left:532px;top:441px;font-size:10.6px;color:#fff;transform:translateX(-50%);letter-spacing:-0.25px;">Serie/Código/Referencia</div>
<div class="cell b" style="left:631px;top:425px;font-size:10.6px;color:#fff;transform:translateX(-50%);">Fecha de</div>
<div class="cell b" style="left:631px;top:441px;font-size:10.6px;color:#fff;transform:translateX(-50%);">compra</div>
<div class="cell b" style="left:721.5px;top:433px;font-size:10.6px;color:#fff;transform:translateX(-50%);">Lugar de compra</div>
<div class="cell b" style="left:829px;top:433px;font-size:10.6px;color:#fff;transform:translateX(-50%);">Precio de compra</div>
<div class="cell b" style="left:925px;top:425px;font-size:10.6px;color:#fff;transform:translateX(-50%);">Precio de</div>
<div class="cell b" style="left:925px;top:441px;font-size:10.6px;color:#fff;transform:translateX(-50%);">venta</div>
<div class="a" style="left:886px;top:482px;width:78px;height:135px;background:#c6c6c6"></div>
<div class="a" style="left:886px;top:501px;width:78px;height:1px;background:#b6b6b6"></div>
<div class="a" style="left:886px;top:520px;width:78px;height:1px;background:#b6b6b6"></div>
<div class="a" style="left:886px;top:540px;width:78px;height:1px;background:#b6b6b6"></div>
<div class="a" style="left:886px;top:559px;width:78px;height:1px;background:#b6b6b6"></div>
<div class="a" style="left:886px;top:579px;width:78px;height:1px;background:#b6b6b6"></div>
<div class="a" style="left:886px;top:598px;width:78px;height:1px;background:#b6b6b6"></div>
<div class="cell" style="left:176px;top:466.5px;font-size:13.0px;color:#222;">Calzado deportivo</div>
<div class="cell" style="left:379px;top:466.5px;font-size:13.0px;color:#222;">Modelo 1</div>
<div class="cell" style="left:668px;top:466.5px;font-size:13.0px;color:#222;transform:translateX(-100%);">26/10/2017</div>
<div class="cell" style="left:673px;top:466.5px;font-size:13.0px;color:#222;">Proveedor 1</div>
<div class="cell" style="left:884px;top:466.5px;font-size:13.0px;color:#222;transform:translateX(-100%);">2422</div>
<div class="cell" style="left:962px;top:466.5px;font-size:13.0px;color:#222;transform:translateX(-100%);">3148.6</div>
<div class="cell" style="left:176px;top:485.5px;font-size:13.0px;color:#222;">Playera</div>
<div class="cell" style="left:379px;top:485.5px;font-size:13.0px;color:#222;">Modelo 2</div>
<div class="cell" style="left:668px;top:485.5px;font-size:13.0px;color:#222;transform:translateX(-100%);">26/10/2017</div>
<div class="cell" style="left:673px;top:485.5px;font-size:13.0px;color:#222;">Proveedor 2</div>
<div class="cell" style="left:884px;top:485.5px;font-size:13.0px;color:#222;transform:translateX(-100%);">1822</div>
<div class="cell" style="left:962px;top:485.5px;font-size:13.0px;color:#222;transform:translateX(-100%);">2368.6</div>
<div class="cell" style="left:176px;top:505.5px;font-size:13.0px;color:#222;">Saco dama</div>
<div class="cell" style="left:379px;top:505.5px;font-size:13.0px;color:#222;">Modelo 3</div>
<div class="cell" style="left:668px;top:505.5px;font-size:13.0px;color:#222;transform:translateX(-100%);">26/10/2017</div>
<div class="cell" style="left:673px;top:505.5px;font-size:13.0px;color:#222;">Proveedor 3</div>
<div class="cell" style="left:884px;top:505.5px;font-size:13.0px;color:#222;transform:translateX(-100%);">1290</div>
<div class="cell" style="left:962px;top:505.5px;font-size:13.0px;color:#222;transform:translateX(-100%);">1677</div>
<div class="cell" style="left:176px;top:524.5px;font-size:13.0px;color:#222;">Camisa</div>
<div class="cell" style="left:379px;top:524.5px;font-size:13.0px;color:#222;">Modelo 4</div>
<div class="cell" style="left:668px;top:524.5px;font-size:13.0px;color:#222;transform:translateX(-100%);">26/10/2017</div>
<div class="cell" style="left:673px;top:524.5px;font-size:13.0px;color:#222;">Proveedor 4</div>
<div class="cell" style="left:884px;top:524.5px;font-size:13.0px;color:#222;transform:translateX(-100%);">1407</div>
<div class="cell" style="left:962px;top:524.5px;font-size:13.0px;color:#222;transform:translateX(-100%);">1829.1</div>
<div class="cell" style="left:176px;top:544.5px;font-size:13.0px;color:#222;">Corbata</div>
<div class="cell" style="left:379px;top:544.5px;font-size:13.0px;color:#222;">Modelo 5</div>
<div class="cell" style="left:668px;top:544.5px;font-size:13.0px;color:#222;transform:translateX(-100%);">26/10/2017</div>
<div class="cell" style="left:673px;top:544.5px;font-size:13.0px;color:#222;">Proveedor 5</div>
<div class="cell" style="left:884px;top:544.5px;font-size:13.0px;color:#222;transform:translateX(-100%);">2484</div>
<div class="cell" style="left:962px;top:544.5px;font-size:13.0px;color:#222;transform:translateX(-100%);">3229.2</div>
<div class="cell" style="left:176px;top:563.5px;font-size:13.0px;color:#222;">Lentes de sol</div>
<div class="cell" style="left:379px;top:563.5px;font-size:13.0px;color:#222;">Modelo 6</div>
<div class="cell" style="left:668px;top:563.5px;font-size:13.0px;color:#222;transform:translateX(-100%);">26/10/2017</div>
<div class="cell" style="left:673px;top:563.5px;font-size:13.0px;color:#222;">Proveedor 6</div>
<div class="cell" style="left:884px;top:563.5px;font-size:13.0px;color:#222;transform:translateX(-100%);">1812</div>
<div class="cell" style="left:962px;top:563.5px;font-size:13.0px;color:#222;transform:translateX(-100%);">2355.6</div>
<div class="cell" style="left:176px;top:583.5px;font-size:13.0px;color:#222;">Pantalón</div>
<div class="cell" style="left:379px;top:583.5px;font-size:13.0px;color:#222;">Modelo 7</div>
<div class="cell" style="left:668px;top:583.5px;font-size:13.0px;color:#222;transform:translateX(-100%);">26/10/2017</div>
<div class="cell" style="left:673px;top:583.5px;font-size:13.0px;color:#222;">Proveedor 7</div>
<div class="cell" style="left:884px;top:583.5px;font-size:13.0px;color:#222;transform:translateX(-100%);">836</div>
<div class="cell" style="left:962px;top:583.5px;font-size:13.0px;color:#222;transform:translateX(-100%);">1086.8</div>
<div class="cell" style="left:176px;top:602.5px;font-size:13.0px;color:#222;">Bolso dama</div>
<div class="cell" style="left:379px;top:602.5px;font-size:13.0px;color:#222;">Modelo 8</div>
<div class="cell" style="left:668px;top:602.5px;font-size:13.0px;color:#222;transform:translateX(-100%);">26/10/2017</div>
<div class="cell" style="left:673px;top:602.5px;font-size:13.0px;color:#222;">Proveedor 8</div>
<div class="cell" style="left:884px;top:602.5px;font-size:13.0px;color:#222;transform:translateX(-100%);">1031</div>
<div class="cell" style="left:962px;top:602.5px;font-size:13.0px;color:#222;transform:translateX(-100%);">1340.3</div>
<div class="a" style="left:885px;top:461px;width:81px;height:158px;border:2px solid #217346"></div>
<div class="a" style="left:961px;top:615px;width:7px;height:7px;background:#217346;border:1px solid #fff"></div>
<svg class="a" style="left:965px;top:619px" width="20" height="20" viewBox="0 0 20 20"><rect x="0.5" y="0.5" width="19" height="19" fill="#fff" stroke="#c6c6c6"/>
<rect x="4" y="4" width="6" height="4" fill="#3d7cc9"/><rect x="4.5" y="4.5" width="11" height="4" fill="none" stroke="#888" stroke-width="0.8"/>
<path d="M4.5 11.5h6M4.5 14.5h6M4.5 11.5v5" stroke="#999" stroke-width="0.8" stroke-dasharray="1 1"/><path d="M13.5 11.5v5M11 14h5" stroke="#777" stroke-width="1"/></svg>
<svg class="a" style="left:0;top:0" width="1255" height="320" viewBox="0 0 1255 320">
<defs>
<linearGradient id="hb" x1="0" y1="0" x2="0" y2="1"><stop offset="0" stop-color="#16b0ff"/><stop offset="1" stop-color="#0a7bef"/></linearGradient>
<radialGradient id="hd" cx="0.4" cy="0.3" r="0.7"><stop offset="0" stop-color="#fff6e8"/><stop offset="0.5" stop-color="#f7cf98"/><stop offset="1" stop-color="#e2a55a"/></radialGradient>
<radialGradient id="bd" cx="0.5" cy="0.4" r="0.7"><stop offset="0" stop-color="#f4f8ff"/><stop offset="0.6" stop-color="#a8c8f5"/><stop offset="1" stop-color="#3e7ee6"/></radialGradient>
<linearGradient id="nb" x1="0" y1="0" x2="1" y2="1"><stop offset="0" stop-color="#f8d15a"/><stop offset="0.45" stop-color="#f1b03e"/><stop offset="1" stop-color="#e2862a"/></linearGradient>
<linearGradient id="cb" x1="0" y1="0" x2="1" y2="1"><stop offset="0" stop-color="#dadada"/><stop offset="0.6" stop-color="#bdbdbd"/><stop offset="1" stop-color="#9c9c9c"/></linearGradient>
<linearGradient id="lcd" x1="0" y1="0" x2="0" y2="1"><stop offset="0" stop-color="#c9cec7"/><stop offset="1" stop-color="#9ea49c"/></linearGradient>
<linearGradient id="key" x1="0" y1="0" x2="0" y2="1"><stop offset="0" stop-color="#a8a8a8"/><stop offset="1" stop-color="#808080"/></linearGradient>
<linearGradient id="dk" x1="0" y1="0" x2="0" y2="1"><stop offset="0" stop-color="#3a3a3a"/><stop offset="1" stop-color="#151515"/></linearGradient>
<linearGradient id="drw" x1="0" y1="0" x2="1" y2="0"><stop offset="0" stop-color="#c9dcef"/><stop offset="1" stop-color="#a9c3df"/></linearGradient>
<linearGradient id="kp" x1="0" y1="0" x2="1" y2="1"><stop offset="0" stop-color="#f2f2f2"/><stop offset="1" stop-color="#cfcfcf"/></linearGradient>
<linearGradient id="yl" x1="0" y1="0" x2="1" y2="0"><stop offset="0" stop-color="#f4d27a"/><stop offset="1" stop-color="#e8b94c"/></linearGradient>
</defs>
<!-- house -->
<path d="M178 248 L213 221 L248 248" fill="none" stroke="#444" stroke-width="5" stroke-linecap="round" stroke-linejoin="round"/>
<rect x="229.5" y="224" width="9" height="12" fill="#444"/>
<path d="M182.5 256 L213 233 L243.5 256 V292 a3 3 0 0 1 -3 3 H222.7 V268 a3 3 0 0 0 -3 -3 H204.8 a3 3 0 0 0 -3 3 V295 H185.5 a3 3 0 0 1 -3 -3 Z" fill="url(#hb)" stroke="#2a3440" stroke-width="1.3"/>
<!-- boxes + pallet -->
<path d="M298 273 L336 270 L372 273 L371 283 L341 290 L298 282 Z" fill="#dccb98"/>
<path d="M298 276 L341 283 L341 290 L298 282 Z" fill="#c4ad78"/>
<path d="M341 283 L371 276 L371 283 L341 290 Z" fill="#b59d68"/>
<path d="M302 278 L315 280 L315 283 L302 281Z M320 281 L337 284 L337 287 L320 284Z M345 282 L368 277 L368 280 L345 285Z" fill="#6d5a3e" opacity="0.8"/>
<path d="M312.5 222.5 L336 221 L336 249.5 L312.5 248 Z" fill="#e2623a"/>
<path d="M336 222 L372 226 L372 252.5 L336 249.5 Z" fill="#dc5c35"/>
<path d="M312 222 L336 220 L372 225 L372 227 L336 223 L312.5 224.5Z" fill="#ec8a64"/>
<path d="M336 251 L371.5 252.5 L371.5 272 L336 276 Z" fill="#d0542f"/>
<path d="M299 249 L335 251 L335 276 L299.5 273 Z" fill="#e0603a"/>
<path d="M299 247.5 L314 246 L336 249 L335 252 L299 250 Z" fill="#ec8a64"/>
<path d="M334 222.5 L336 222 L336 276 L334 276Z" fill="#a63c1c" opacity="0.8"/><path d="M336.5 222 L337.5 222 L337.5 276 L336.5 276Z" fill="#f08a62" opacity="0.7"/><path d="M336 249.5 L372 252.5 L372 254 L336 251Z" fill="#a63c1c" opacity="0.6"/><path d="M312.5 248 L314 246.5 L314 222 L312.5 222.5Z" fill="#f3a07c" opacity="0.6"/>
<g fill="#fff" opacity="0.85"><rect x="327" y="240" width="4" height="2"/><rect x="362" y="244" width="4" height="2"/><rect x="314" y="266" width="4" height="2"/><rect x="338" y="256" width="3" height="4"/>
<rect x="314" y="226" width="6" height="1.5"/><rect x="339" y="228" width="6" height="1.5"/><rect x="301" y="253" width="6" height="1.5"/></g>
<!-- person -->
<path d="M431 280 C431 262 440 253 459 253 C478 253 488 262 488 280 C488 293 478 297 459 297 C440 297 431 293 431 280Z" fill="url(#bd)" stroke="#1f55d0" stroke-width="1.6"/>
<path d="M447 256 L455 263 L451 266Z M471 256 L463 263 L467 266Z" fill="#e8f0ff" stroke="#7aa0e0" stroke-width="0.6"/>
<path d="M455 259 L463 259 L465 286 L459 292 L453 286 Z" fill="#d8262b"/>
<path d="M455 265 L464 270 M454 273 L464 278 M454 281 L464 285" stroke="#f07070" stroke-width="0.8"/>
<rect x="467" y="268" width="8" height="8" rx="1.5" fill="none" stroke="#9ab8e8" stroke-width="0.7"/><circle cx="472.5" cy="268.5" r="0.9" fill="#2a9a3a"/>
<circle cx="458.7" cy="239" r="19.3" fill="url(#hd)" stroke="#c98536" stroke-width="1.2"/>
<!-- money -->
<path d="M549 259 L549 268.5 L569 280.5 L606.5 254.5 L606.5 244.7 L569 270 Z" fill="#e9ede0"/>
<path d="M549 261 L569 273 L606.5 247 M549 263.5 L569 275.5 L606.5 249.5 M549 266 L569 278 L606.5 252" fill="none" stroke="#a3ad92" stroke-width="0.7"/>
<path d="M549 259 L586.5 235 L606.5 244.7 L569 270 Z" fill="#cdd6bd" stroke="#8c9a7d" stroke-width="0.7"/>
<path d="M553 258.5 L586 237.5 L602 245 L569 266.5 Z" fill="none" stroke="#909c80" stroke-width="0.7"/>
<ellipse cx="574" cy="253" rx="6" ry="3.5" fill="#a4ae94" transform="rotate(-33 574 253)"/>
<path d="M566.5 247.5 L577 241 L596.5 252 L585.5 259 Z" fill="#90d22c"/>
<path d="M585.5 259 L596.5 252 L596.5 262 L585.5 269.5Z" fill="#6fae1c"/>
<!-- notebook -->
<path d="M673 229 L741 228 L743 289 L673 291Z" fill="#f4f4f4"/>
<rect x="669" y="227" width="70" height="63" fill="url(#nb)"/>
<rect x="669" y="227" width="5" height="63" fill="#e49a3e"/>
<rect x="674" y="227" width="2" height="63" fill="#f8d07a" opacity="0.7"/>
<path d="M705 290 L720 227 L739 227 L739 290Z" fill="#fff" opacity="0.08"/>
<g stroke="#777" stroke-width="1.6" stroke-linecap="round"><path d="M665.5 239.5h8M665.5 252.5h8M665.5 266h8M665.5 279.5h8"/></g>
<g fill="#333"><circle cx="675" cy="239.5" r="1.8"/><circle cx="675" cy="252.5" r="1.8"/><circle cx="675" cy="266" r="1.8"/><circle cx="675" cy="279.5" r="1.8"/></g>
<!-- calculator -->
<rect x="795.5" y="216.5" width="63" height="83.5" rx="4" fill="url(#cb)" stroke="#6a6a6a" stroke-width="1"/>
<path d="M795.5 245 V220.5 a4 4 0 0 1 4 -4 H854.5 a4 4 0 0 1 4 4 V245Z" fill="#474747"/>
<rect x="799.5" y="223.5" width="54" height="19.5" rx="1" fill="url(#lcd)" stroke="#bbb" stroke-width="1"/>
<text x="803" y="239.5" font-family="Liberation Mono" font-size="16" fill="#9ba098" textLength="20" lengthAdjust="spacingAndGlyphs">888</text>
<text x="851" y="239.5" font-family="Liberation Mono" font-size="16" fill="#2a2a2a" text-anchor="end" textLength="27" lengthAdjust="spacingAndGlyphs">1250</text>
<g>
<rect x="801" y="249" width="8.5" height="9" rx="1" fill="url(#dk)"/><rect x="812" y="249" width="8.5" height="9" rx="1" fill="url(#key)"/><rect x="823" y="249" width="8.5" height="9" rx="1" fill="url(#key)"/><rect x="834" y="249" width="8.5" height="9" rx="1" fill="url(#key)"/><rect x="844.5" y="249" width="8.5" height="9" rx="1" fill="url(#dk)"/>
<rect x="801" y="261" width="8.5" height="9" rx="1" fill="url(#dk)"/><rect x="812" y="261" width="8.5" height="9" rx="1" fill="url(#key)"/><rect x="823" y="261" width="8.5" height="9" rx="1" fill="url(#key)"/><rect x="834" y="261" width="8.5" height="9" rx="1" fill="url(#key)"/><rect x="844.5" y="261" width="8.5" height="9" rx="1" fill="url(#dk)"/>
<rect x="801" y="272" width="8.5" height="9" rx="1" fill="url(#dk)"/><rect x="812" y="272" width="8.5" height="9" rx="1" fill="url(#key)"/><rect x="823" y="272" width="8.5" height="9" rx="1" fill="url(#key)"/><rect x="834" y="272" width="8.5" height="9" rx="1" fill="url(#key)"/><rect x="844.5" y="272" width="8.5" height="20" rx="1" fill="url(#dk)"/>
<rect x="801" y="283.5" width="8.5" height="9" rx="1" fill="#c8202a"/><rect x="812" y="283.5" width="8.5" height="9" rx="1" fill="url(#key)"/><rect x="823" y="283.5" width="8.5" height="9" rx="1" fill="url(#key)"/><rect x="834" y="283.5" width="8.5" height="9" rx="1" fill="url(#dk)"/>
</g>
<!-- cash register -->
<path d="M909 270 L950 278 L950 291.5 L909 284 Z" fill="url(#drw)" stroke="#8aa6c6" stroke-width="0.6"/>
<path d="M950 278 L989 256 L989 270 L950 291.5 Z" fill="#95b2d3"/>
<path d="M909 270 L912 267 L953 273 L989 253 L989 256 L950 278 Z" fill="#e6eef6"/>
<path d="M912 273 L947 279.5 L947 288 L912 282Z" fill="none" stroke="#9bb4d0" stroke-width="0.6"/>
<circle cx="942" cy="284.5" r="1" fill="#667"/>
<path d="M911.5 264.5 L932 251 L986 250.5 L986 257 L953 270 L911.5 269 Z" fill="url(#kp)"/>
<path d="M911.5 264.5 L953 270 L953 274.5 L911.5 269Z" fill="#d9d9d9"/>
<path d="M953 270 L986 257 L986 261 L953 274.5Z" fill="#bdbdbd"/>
<path d="M932 251 L940 238 L978 236 L985 241 L985.5 251 L969 255.5 Z" fill="url(#yl)"/>
<path d="M940 238 L978 236 L985 241 L947 243.5Z" fill="#f6dc8c"/>
<path d="M937 247.5 L940.5 243 L972 247 L969 253 Z" fill="#3b3f3a"/>
<path d="M963 249 L969 248.5 L968 251.5 L962 252Z" fill="#3a8a3a"/>
<path d="M948 241 L950 228 C950 224.5 968 223 970 227 C971 229.5 969.5 231.5 967 231 L962 231 L961 240Z" fill="#f3f3f3" stroke="#b5b5b5" stroke-width="0.6"/>
<g fill="#8c8c8c">
<rect x="930" y="256" width="2.5" height="2" /><rect x="934" y="255" width="2.5" height="2"/><rect x="938" y="254" width="2.5" height="2"/>
<rect x="928" y="259" width="2.5" height="2"/><rect x="932" y="258" width="2.5" height="2"/><rect x="936" y="257" width="2.5" height="2"/><rect x="940" y="256" width="2.5" height="2"/>
<rect x="926" y="262" width="2.5" height="2"/><rect x="930" y="261" width="2.5" height="2"/><rect x="934" y="260" width="2.5" height="2"/><rect x="938" y="259" width="2.5" height="2"/>
<rect x="922" y="263" width="5" height="2"/>
</g>
<rect x="941" y="264.5" width="9" height="3.5" fill="#7fd07f"/>
<rect x="951" y="256" width="7" height="3" fill="#a9c6e6"/><rect x="948" y="260" width="6" height="3" fill="#a9c6e6"/>
</svg>
<div class="a" style="left:1238px;top:198px;width:17px;height:459px;background:#e6e6e6"></div>
<div class="a" style="left:1241px;top:200px;width:13px;height:373px;background:#fff;border:1px solid #d0d0d0"></div>
<div class="a" style="left:1241px;top:573px;width:13px;height:70px;background:#dadada"></div>
<div class="a" style="left:1241px;top:643px;width:13px;height:13px;background:#fff;border:1px solid #d0d0d0"></div>
<div class="a" style="left:1241px;top:212px;width:13px;height:1px;background:#d0d0d0"></div>
<svg class="a" style="left:1241px;top:200px" width="13" height="13"><path d="M3 8.5h7l-3.5-4z" fill="#666"/></svg>
<svg class="a" style="left:1241px;top:643px" width="13" height="13"><path d="M3 4.5h7l-3.5 4z" fill="#666"/></svg>
<div class="a" style="left:0;top:658px;width:1255px;height:27px;background:#e6e6e6"></div>
<svg class="a" style="left:0;top:657px" width="80" height="27"><path d="M30.5 9.5v7l-4-3.5z M52.5 9.5v7l4-3.5z" fill="#c0c0c0"/></svg>
<div class="a" style="left:94px;top:661px;width:1px;height:19px;background:#9a9a9a"></div>
<div class="a" style="left:302px;top:661px;width:1px;height:19px;background:#9a9a9a"></div>
<div class="a" style="left:424px;top:661px;width:1px;height:19px;background:#9a9a9a"></div>
<div class="a" style="left:497px;top:661px;width:1px;height:19px;background:#9a9a9a"></div>
<div class="a" style="left:556px;top:661px;width:1px;height:19px;background:#9a9a9a"></div>
<div class="a" style="left:618px;top:661px;width:1px;height:19px;background:#9a9a9a"></div>
<div class="a" style="left:147px;top:658px;width:71px;height:23px;background:#fff"></div>
<div class="a" style="left:147px;top:679px;width:71px;height:2px;background:#217346"></div>
<div class="t" style="left:119.3px;top:664px;font-size:12.2px;color:#444;transform:translateX(-50%)">Inicio</div>
<div class="t" style="left:258.8px;top:664px;font-size:12.2px;color:#444;transform:translateX(-50%)">Empleados</div>
<div class="t" style="left:362px;top:664px;font-size:12.2px;color:#444;transform:translateX(-50%)">Compras y ventas</div>
<div class="t" style="left:459px;top:664px;font-size:12.2px;color:#444;transform:translateX(-50%)">Catálogo</div>
<div class="t" style="left:525px;top:664px;font-size:12.2px;color:#444;transform:translateX(-50%)">Gastos</div>
<div class="t" style="left:586.6px;top:664px;font-size:12.2px;color:#444;transform:translateX(-50%)">Factura</div>
<div class="t b" style="left:181.5px;top:664px;font-size:12.2px;color:#217346;transform:translateX(-50%)">Almacén</div>
<svg class="a" style="left:648px;top:662px" width="17" height="17"><circle cx="8.5" cy="8.5" r="6.5" fill="none" stroke="#777" stroke-width="1.2"/><path d="M8.5 5v7M5 8.5h7" stroke="#777" stroke-width="1.3"/></svg>
<svg class="a" style="left:753px;top:664px" width="5" height="16"><circle cx="2" cy="2.5" r="0.9" fill="#999"/><circle cx="2" cy="7" r="0.9" fill="#999"/><circle cx="2" cy="11.5" r="0.9" fill="#999"/></svg>
<div class="a" style="left:770px;top:664px;width:467px;height:14px;background:#dadada"></div>
<div class="a" style="left:770px;top:664px;width:411px;height:14px;background:#fff;border:1px solid #c8c8c8"></div>
<div class="a" style="left:770px;top:664px;width:14px;height:14px;background:#fff;border:1px solid #c8c8c8"></div>
<div class="a" style="left:1223px;top:664px;width:14px;height:14px;background:#fff;border:1px solid #c8c8c8"></div>
<svg class="a" style="left:770px;top:664px" width="14" height="14"><path d="M9 3.5v7l-4-3.5z" fill="#666"/></svg>
<svg class="a" style="left:1223px;top:664px" width="14" height="14"><path d="M5 3.5v7l4-3.5z" fill="#666"/></svg>
<div class="a" style="left:0;top:684px;width:1255px;height:1px;background:#d4d4d4"></div>
<div class="a" style="left:0;top:685px;width:1255px;height:20px;background:#f0f0f0"></div>
<div class="t" style="left:9px;top:689px;font-size:11px;color:#555">Listo</div>
<svg class="a" style="left:72px;top:687px" width="14" height="14"><circle cx="4" cy="3.5" r="2.5" fill="#555"/><rect x="2.5" y="6.5" width="10" height="7" fill="none" stroke="#666"/><path d="M5 8v5M7.5 8v5M10 8v5" stroke="#888"/></svg>
<div class="t" style="left:738px;top:690px;font-size:10.6px;color:#4a4a4a">Promedio: 2129.4</div>
<div class="t" style="left:834px;top:690px;font-size:10.6px;color:#4a4a4a">Recuento: 8</div>
<div class="t" style="left:905px;top:690px;font-size:10.6px;color:#4a4a4a">Suma: 17035.2</div>
<div class="a" style="left:989px;top:685px;width:35px;height:18px;background:#cfcfcf"></div>
<svg class="a" style="left:990px;top:685px" width="265" height="19" viewBox="990 684 265 19">
<g fill="none" stroke="#666" stroke-width="1">
<rect x="1000.5" y="687.5" width="12" height="12"/><path d="M1004.5 687.5v12M1008.5 687.5v12M1000.5 691.5h12M1000.5 695.5h12"/>
<rect x="1035.5" y="687.5" width="12" height="12"/><rect x="1038.5" y="690.5" width="6" height="6"/>
<path d="M1070.5 687.5h12v12h-12z M1073.5 687.5v5h3v-5 M1076.5 692.5h6"/>
</g>
<path d="M1098 694h5" stroke="#444" stroke-width="1.5"/>
<path d="M1107 694h92" stroke="#bbb" stroke-width="1"/>
<rect x="1151" y="688" width="3" height="12" fill="#555"/>
<path d="M1203 694h8M1207 690v8" stroke="#444" stroke-width="1.5"/>
</svg>
<div class="t" style="left:1225px;top:690px;font-size:10.6px;color:#555">100%</div>
<svg class="a" style="left:1005px;top:540px" width="200" height="140" viewBox="1005 540 200 140">
<defs>
<radialGradient id="scr" cx="0.45" cy="0.45" r="0.7"><stop offset="0" stop-color="#b8e4fb"/><stop offset="0.6" stop-color="#78c2ee"/><stop offset="1" stop-color="#4a9fd6"/></radialGradient>
<linearGradient id="wg" x1="0" y1="0" x2="0" y2="1"><stop offset="0" stop-color="#7fd35a"/><stop offset="0.5" stop-color="#a8e07c"/><stop offset="1" stop-color="#c4ec9e"/></linearGradient>
<filter id="bl" x="-50%" y="-50%" width="200%" height="200%"><feGaussianBlur stdDeviation="2.5"/></filter>
<filter id="sh" x="-30%" y="-30%" width="160%" height="160%"><feGaussianBlur in="SourceAlpha" stdDeviation="2"/><feOffset dx="0" dy="1"/><feComponentTransfer><feFuncA type="linear" slope="0.7"/></feComponentTransfer><feMerge><feMergeNode/><feMergeNode in="SourceGraphic"/></feMerge></filter>
</defs>
<g fill="url(#wg)" opacity="0.85">
<path d="M1029.9 552.0 A31.62 31.62 0 0 0 1029.9 603.0 L1033.8 597.8 A25.12 25.12 0 0 1 1033.8 557.2 Z"/>
<path d="M1170.1 603.0 A31.62 31.62 0 0 0 1170.1 552.0 L1166.2 557.2 A25.12 25.12 0 0 1 1166.2 597.8 Z"/>
<path d="M1040.6 556.5 A26.04 26.04 0 0 0 1040.6 598.5 L1044.2 593.7 A20.04 20.04 0 0 1 1044.2 561.3 Z"/>
<path d="M1159.4 598.5 A26.04 26.04 0 0 0 1159.4 556.5 L1155.8 561.3 A20.04 20.04 0 0 1 1155.8 593.7 Z"/>
<path d="M1051.1 561.5 A19.84 19.84 0 0 0 1051.1 593.5 L1054.4 589.1 A14.34 14.34 0 0 1 1054.4 565.9 Z"/>
<path d="M1148.9 593.5 A19.84 19.84 0 0 0 1148.9 561.5 L1145.6 565.9 A14.34 14.34 0 0 1 1145.6 589.1 Z"/>
<path d="M1060.8 566.0 A14.26 14.26 0 0 0 1060.8 589.0 L1063.8 585.0 A9.26 9.26 0 0 1 1063.8 570.0 Z"/>
<path d="M1139.2 589.0 A14.26 14.26 0 0 0 1139.2 566.0 L1136.2 570.0 A9.26 9.26 0 0 1 1136.2 585.0 Z"/>
<path d="M1067.3 571.0 A8.06 8.06 0 0 0 1067.3 584.0 L1070.0 580.4 A3.5600000000000005 3.5600000000000005 0 0 1 1070.0 574.6 Z"/>
<path d="M1132.7 584.0 A8.06 8.06 0 0 0 1132.7 571.0 L1130.0 574.6 A3.5600000000000005 3.5600000000000005 0 0 1 1130.0 580.4 Z"/>
</g>
<rect x="1074.5" y="555" width="50.5" height="38.5" rx="2.5" fill="#8c8c8c"/>
<rect x="1077.5" y="558" width="44.5" height="32" fill="url(#scr)"/>
<rect x="1094" y="593.5" width="12" height="6" fill="#a8a8a8"/>
<rect x="1085" y="599.5" width="29" height="3.5" rx="1" fill="#b8b8b8"/>
<rect x="1074.5" y="604.5" width="48.5" height="10.5" rx="2" fill="#c6c6c6"/>
<rect x="1076" y="605.5" width="45" height="2" fill="#dedede"/>
<text x="1013.5" y="653" font-family="Liberation Sans" font-weight="bold" font-size="41" fill="#6d7d98" textLength="78" lengthAdjust="spacingAndGlyphs">EXPERTO</text>
<text x="1148" y="653" font-family="Liberation Sans" font-weight="bold" font-size="41" fill="#6d7d98" textLength="39.5" lengthAdjust="spacingAndGlyphs">.NET</text>
<ellipse cx="1120" cy="661" rx="20" ry="5" fill="#000" opacity="0.3" filter="url(#bl)"/>
<text x="1097" y="653" font-family="Liberation Sans" font-size="38" fill="#fafafa" filter="url(#sh)" textLength="47" lengthAdjust="spacingAndGlyphs">digital</text>
</svg>
<svg class="a" style="left:1026px;top:572px" width="17" height="17" viewBox="0 0 17 17"><path d="M5.5 1.5h6v4h4v6h-4v4h-6v-4h-4v-6h4z" fill="#fff" stroke="#111" stroke-width="1.3"/></svg>
<div class="a" style="left:0;top:62px;width:1px;height:643px;background:#111"></div>
<div class="a" style="left:0;top:0;width:1px;height:62px;background:#111"></div>
<div class="a" style="left:1254px;top:62px;width:1px;height:643px;background:#111"></div>
<div class="a" style="left:0;top:703px;width:1255px;height:2px;background:#111"></div>
</body></html>
